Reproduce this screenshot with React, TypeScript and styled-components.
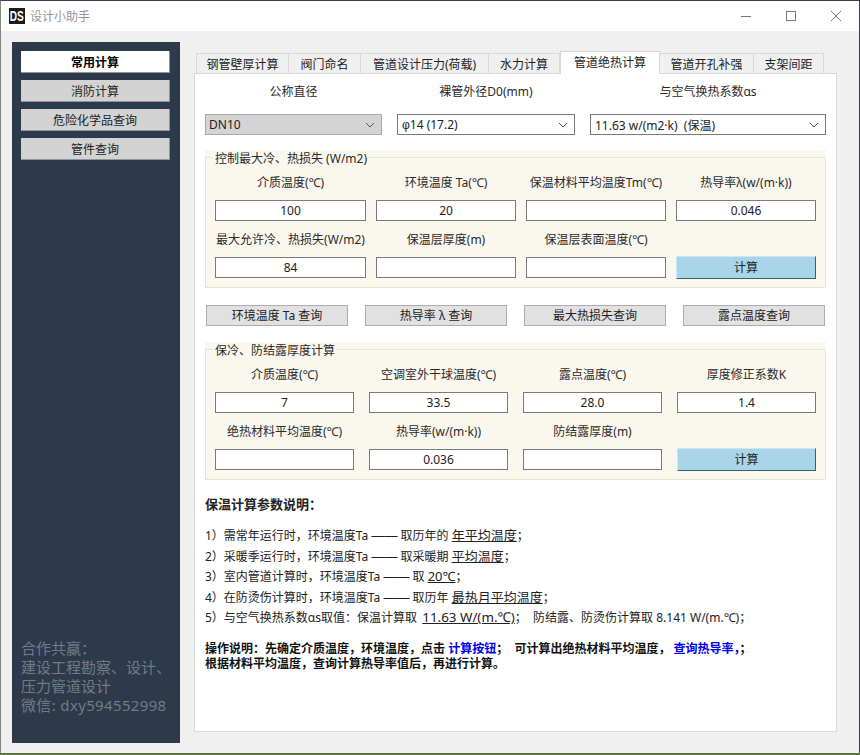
import { createGlobalStyle } from "styled-components";
import styled from "styled-components";

const GlobalStyle = createGlobalStyle`
  html, body {
    margin: 0;
    padding: 0;
    background: #5f7438;
  }
  * {
    box-sizing: border-box;
  }
  body {
    font-family: "Noto Sans", "Noto Sans CJK SC", sans-serif;
    font-size: 12px;
    color: #222;
  }
`;

const Win = styled.div`
  width: 860px;
  height: 753px;
  overflow: hidden;
  background: #f0f0f0;
  border-top: 1px solid #3c3e58;
  border-left: 1px solid #7f8a78;
  border-right: 1px solid #3c3e58;
`;

const TitleBar = styled.div`
  height: 30px;
  background: #fff;
  display: flex;
  align-items: center;
  padding: 0 1px 0 8px;
`;

const Logo = styled.div`
  width: 16px;
  height: 16px;
  background: #1c1c1c;
  display: flex;
  align-items: center;
  justify-content: center;
  overflow: hidden;
`;

const LogoText = styled.span`
  display: inline-block;
  color: #fff;
  font-family: "Liberation Sans", sans-serif;
  font-weight: 700;
  font-size: 14px;
  line-height: 16px;
  transform: scaleX(0.72);
`;

const AppTitle = styled.span`
  margin-left: 5px;
  font-size: 12px;
  color: #959595;
`;

const WinControls = styled.div`
  margin-left: auto;
  display: flex;
  align-items: center;
  color: #777;
`;

const WinBtn = styled.div`
  width: 45px;
  height: 30px;
  display: flex;
  align-items: center;
  justify-content: center;
`;

const Main = styled.div`
  display: flex;
  padding: 11px 0 0 11px;
`;

const Sidebar = styled.aside`
  width: 168px;
  height: 701px;
  background: #2d3a4b;
  padding: 9px 10px 28px 9px;
  display: flex;
  flex-direction: column;
`;

const NavList = styled.div`
  display: flex;
  flex-direction: column;
  gap: 7px;
`;

const NavBtn = styled.div<{ $active?: boolean }>`
  height: 22px;
  background: ${(p) => (p.$active ? "#fff" : "#d3d3d3")};
  border-right: 1px solid #8f959c;
  border-bottom: 1px solid #8f959c;
  font-weight: ${(p) => (p.$active ? 700 : 400)};
  color: ${(p) => (p.$active ? "#000" : "#222")};
  font-size: 12px;
  line-height: 23px;
  text-align: center;
`;

const Contact = styled.div`
  margin-top: auto;
  font-size: 15px;
  line-height: 19px;
  color: #6f7b87;
  white-space: nowrap;
`;

const ContactWx = styled.span`
  letter-spacing: 0.35px;
`;

const Content = styled.div`
  margin-left: 14px;
  width: 643px;
  padding-top: 9px;
`;

const TabBar = styled.div`
  height: 22px;
  padding-left: 2px;
  display: flex;
  align-items: flex-end;
`;

const Tab = styled.div<{ $w: number; $active?: boolean }>`
  width: ${(p) => p.$w}px;
  height: ${(p) => (p.$active ? 23 : 20)}px;
  margin-bottom: ${(p) => (p.$active ? -1 : 0)}px;
  position: relative;
  background: ${(p) => (p.$active ? "#fff" : "#f0f0f0")};
  border: 1px solid #d9d9d9;
  border-bottom: none;
  border-left-width: ${(p) => (p.$active ? 1 : 0)}px;
  font-size: 12px;
  line-height: 21px;
  text-align: center;
  white-space: nowrap;
  &:first-child {
    border-left-width: 1px;
  }
`;

const Pane = styled.div`
  height: 659px;
  background: #fff;
  border: 1px solid #d9d9d9;
  padding: 6px 10px 0 10px;
`;

const ComboGrid = styled.div`
  display: grid;
  grid-template-columns: 177px 178px 236px;
  grid-template-rows: 22px 21px;
  column-gap: 15px;
  row-gap: 12px;
`;

const TopLabel = styled.div`
  padding-top: 2px;
  font-size: 12px;
  line-height: 20px;
  text-align: center;
  white-space: nowrap;
  color: #2a2a2a;
`;

const FieldLabel = styled.div`
  padding-top: 1px;
  font-size: 12px;
  line-height: 20px;
  text-align: center;
  white-space: nowrap;
  color: #2a2a2a;
`;

const Combo = styled.div<{ $filled?: boolean }>`
  height: 21px;
  display: flex;
  align-items: center;
  justify-content: space-between;
  padding: 0 6px 0 ${(p) => (p.$filled ? 3 : 4)}px;
  background: ${(p) => (p.$filled ? "#d4d4d4" : "#fff")};
  border: 1px solid ${(p) => (p.$filled ? "#a9a9a9" : "#7a7a7a")};
  font-size: 12px;
  white-space: pre;
`;

const Phi = styled.span`
  font-family: "Liberation Sans", sans-serif;
`;

const GroupBox = styled.section<{ $top: number }>`
  position: relative;
  margin-top: ${(p) => p.$top}px;
  padding-top: 7px;
  background: #faf7ee;
`;

const GroupFrame = styled.div<{ $cols: string; $gap: number }>`
  border: 1px solid #e6e3da;
  padding: 14px 9px 9px 9px;
  display: grid;
  grid-template-columns: ${(p) => p.$cols};
  grid-template-rows: 20px 21px 20px 21px;
  column-gap: ${(p) => p.$gap}px;
  row-gap: 8px;
`;

const GroupTitle = styled.div`
  position: absolute;
  left: 8px;
  top: 1px;
  padding: 0 2px;
  background: #faf7ee;
  font-size: 12px;
  line-height: 15px;
  color: #2a2a2a;
`;

const ValueInput = styled.input`
  width: 100%;
  height: 21px;
  border: 1px solid #7a7a7a;
  background: #fff;
  padding: 0;
  text-align: center;
  font-family: inherit;
  font-size: 12px;
  color: #222;
  outline: none;
`;

const CalcBtn = styled.div`
  height: 23px;
  margin-top: -1px;
  background: #a8d5e8;
  border-top: 1px solid #c9e8f5;
  border-left: 1px solid #c9e8f5;
  border-right: 1px solid #3f5f70;
  border-bottom: 1px solid #3f5f70;
  font-size: 12px;
  line-height: 21px;
  text-align: center;
`;

const QueryRow = styled.div`
  margin: 17px 1px 0 1px;
  display: grid;
  grid-template-columns: repeat(4, 142px);
  column-gap: 17px;
`;

const QueryBtn = styled.div`
  height: 21px;
  background: #e1e1e1;
  border: 1px solid #adadad;
  font-size: 12px;
  line-height: 19px;
  text-align: center;
  white-space: nowrap;
`;

const NotesTitle = styled.h3`
  margin: 15px 0 12px 0;
  font-size: 13px;
  line-height: 18px;
  font-weight: 700;
  color: #222;
`;

const NoteLine = styled.div`
  height: 20.5px;
  font-size: 12px;
  line-height: 20px;
  white-space: pre;
`;

const Mark = styled.span`
  font-size: 13px;
  text-decoration: underline;
`;

const WideMark = styled(Mark)`
  font-size: 13.4px;
  margin-left: 2px;
`;

const Dash = styled.span`
  font-family: "Liberation Sans", sans-serif;
  font-size: 13px;
`;

const HowTo = styled.p`
  margin: 13px 0 0 0;
  font-size: 12px;
  line-height: 15.5px;
  font-weight: 700;
  color: #111;
  white-space: pre;
`;

const Blue = styled.span`
  color: #0000f0;
`;

const tabs = [
  { label: "钢管壁厚计算", w: 93 },
  { label: "阀门命名", w: 72 },
  { label: "管道设计压力(荷载)", w: 128 },
  { label: "水力计算", w: 71 },
  { label: "管道绝热计算", w: 100, active: true },
  { label: "管道开孔补强", w: 94 },
  { label: "支架间距", w: 70 },
];

const Chevron = () => (
  <svg width="10" height="6" viewBox="0 0 10 6" fill="none" stroke="#555" strokeWidth="1">
    <path d="M1 1l4 4 4-4" />
  </svg>
);

export default function App() {
  return (
    <Win>
      <GlobalStyle />
      <TitleBar>
        <Logo>
          <LogoText>DS</LogoText>
        </Logo>
        <AppTitle>设计小助手</AppTitle>
        <WinControls>
          <WinBtn>
            <svg width="10" height="10" viewBox="0 0 10 10" stroke="#777" fill="none">
              <path d="M0 5.5h10" />
            </svg>
          </WinBtn>
          <WinBtn>
            <svg width="10" height="10" viewBox="0 0 10 10" stroke="#777" fill="none">
              <rect x="0.5" y="0.5" width="9" height="9" />
            </svg>
          </WinBtn>
          <WinBtn>
            <svg width="10" height="10" viewBox="0 0 10 10" stroke="#777" fill="none">
              <path d="M0 0l10 10M10 0L0 10" />
            </svg>
          </WinBtn>
        </WinControls>
      </TitleBar>
      <Main>
        <Sidebar>
          <NavList>
            <NavBtn $active>常用计算</NavBtn>
            <NavBtn>消防计算</NavBtn>
            <NavBtn>危险化学品查询</NavBtn>
            <NavBtn>管件查询</NavBtn>
          </NavList>
          <Contact>
            合作共赢：
            <br />
            建设工程勘察、设计、
            <br />
            压力管道设计
            <br />
            <ContactWx>微信: dxy594552998</ContactWx>
          </Contact>
        </Sidebar>
        <Content>
          <TabBar>
            {tabs.map((t) => (
              <Tab key={t.label} $w={t.w} $active={t.active}>
                {t.label}
              </Tab>
            ))}
          </TabBar>
          <Pane>
            <ComboGrid>
              <TopLabel>公称直径</TopLabel>
              <TopLabel>裸管外径D0(mm)</TopLabel>
              <TopLabel>与空气换热系数αs</TopLabel>
              <Combo $filled>
                DN10
                <Chevron />
              </Combo>
              <Combo>
                <span>
                  <Phi>φ</Phi>14 (17.2)
                </span>
                <Chevron />
              </Combo>
              <Combo>
                11.63 w/(m2·k)  (保温)
                <Chevron />
              </Combo>
            </ComboGrid>

            <GroupBox $top={15}>
              <GroupTitle>控制最大冷、热损失 (W/m2)</GroupTitle>
              <GroupFrame $cols="151px 140px 140px 140px" $gap={10}>
                <FieldLabel>介质温度(℃)</FieldLabel>
                <FieldLabel>环境温度 Ta(℃)</FieldLabel>
                <FieldLabel>保温材料平均温度Tm(℃)</FieldLabel>
                <FieldLabel>热导率λ(w/(m·k))</FieldLabel>
                <ValueInput readOnly value="100" />
                <ValueInput readOnly value="20" />
                <ValueInput readOnly value="" />
                <ValueInput readOnly value="0.046" />
                <FieldLabel>最大允许冷、热损失(W/m2)</FieldLabel>
                <FieldLabel>保温层厚度(m)</FieldLabel>
                <FieldLabel>保温层表面温度(℃)</FieldLabel>
                <div />
                <ValueInput readOnly value="84" />
                <ValueInput readOnly value="" />
                <ValueInput readOnly value="" />
                <CalcBtn>计算</CalcBtn>
              </GroupFrame>
            </GroupBox>

            <QueryRow>
              <QueryBtn>环境温度 Ta 查询</QueryBtn>
              <QueryBtn>热导率 λ 查询</QueryBtn>
              <QueryBtn>最大热损失查询</QueryBtn>
              <QueryBtn>露点温度查询</QueryBtn>
            </QueryRow>

            <GroupBox $top={16}>
              <GroupTitle>保冷、防结露厚度计算</GroupTitle>
              <GroupFrame $cols="repeat(4, 139px)" $gap={15}>
                <FieldLabel>介质温度(℃)</FieldLabel>
                <FieldLabel>空调室外干球温度(℃)</FieldLabel>
                <FieldLabel>露点温度(℃)</FieldLabel>
                <FieldLabel>厚度修正系数K</FieldLabel>
                <ValueInput readOnly value="7" />
                <ValueInput readOnly value="33.5" />
                <ValueInput readOnly value="28.0" />
                <ValueInput readOnly value="1.4" />
                <FieldLabel>绝热材料平均温度(℃)</FieldLabel>
                <FieldLabel>热导率(w/(m·k))</FieldLabel>
                <FieldLabel>防结露厚度(m)</FieldLabel>
                <div />
                <ValueInput readOnly value="" />
                <ValueInput readOnly value="0.036" />
                <ValueInput readOnly value="" />
                <CalcBtn>计算</CalcBtn>
              </GroupFrame>
            </GroupBox>

            <NotesTitle>保温计算参数说明：</NotesTitle>
            <NoteLine>
              1）需常年运行时，环境温度Ta <Dash>——</Dash> 取历年的 <Mark>年平均温度</Mark>；
            </NoteLine>
            <NoteLine>
              2）采暖季运行时，环境温度Ta <Dash>——</Dash> 取采暖期 <Mark>平均温度</Mark>；
            </NoteLine>
            <NoteLine>
              3）室内管道计算时，环境温度Ta <Dash>——</Dash> 取 <Mark>20℃</Mark>；
            </NoteLine>
            <NoteLine>
              4）在防烫伤计算时，环境温度Ta <Dash>——</Dash> 取历年 <Mark>最热月平均温度</Mark>；
            </NoteLine>
            <NoteLine>
              5）与空气换热系数αs取值：保温计算取 <WideMark>11.63 W/(m.℃)</WideMark>；  防结露、防烫伤计算取 8.141 W/(m.℃)；
            </NoteLine>
            <HowTo>
              操作说明：先确定介质温度，环境温度，点击 <Blue>计算按钮</Blue>；  可计算出绝热材料平均温度， <Blue>查询热导率，</Blue>；
              {"\n"}根据材料平均温度，查询计算热导率值后，再进行计算。
            </HowTo>
          </Pane>
        </Content>
      </Main>
    </Win>
  );
}
